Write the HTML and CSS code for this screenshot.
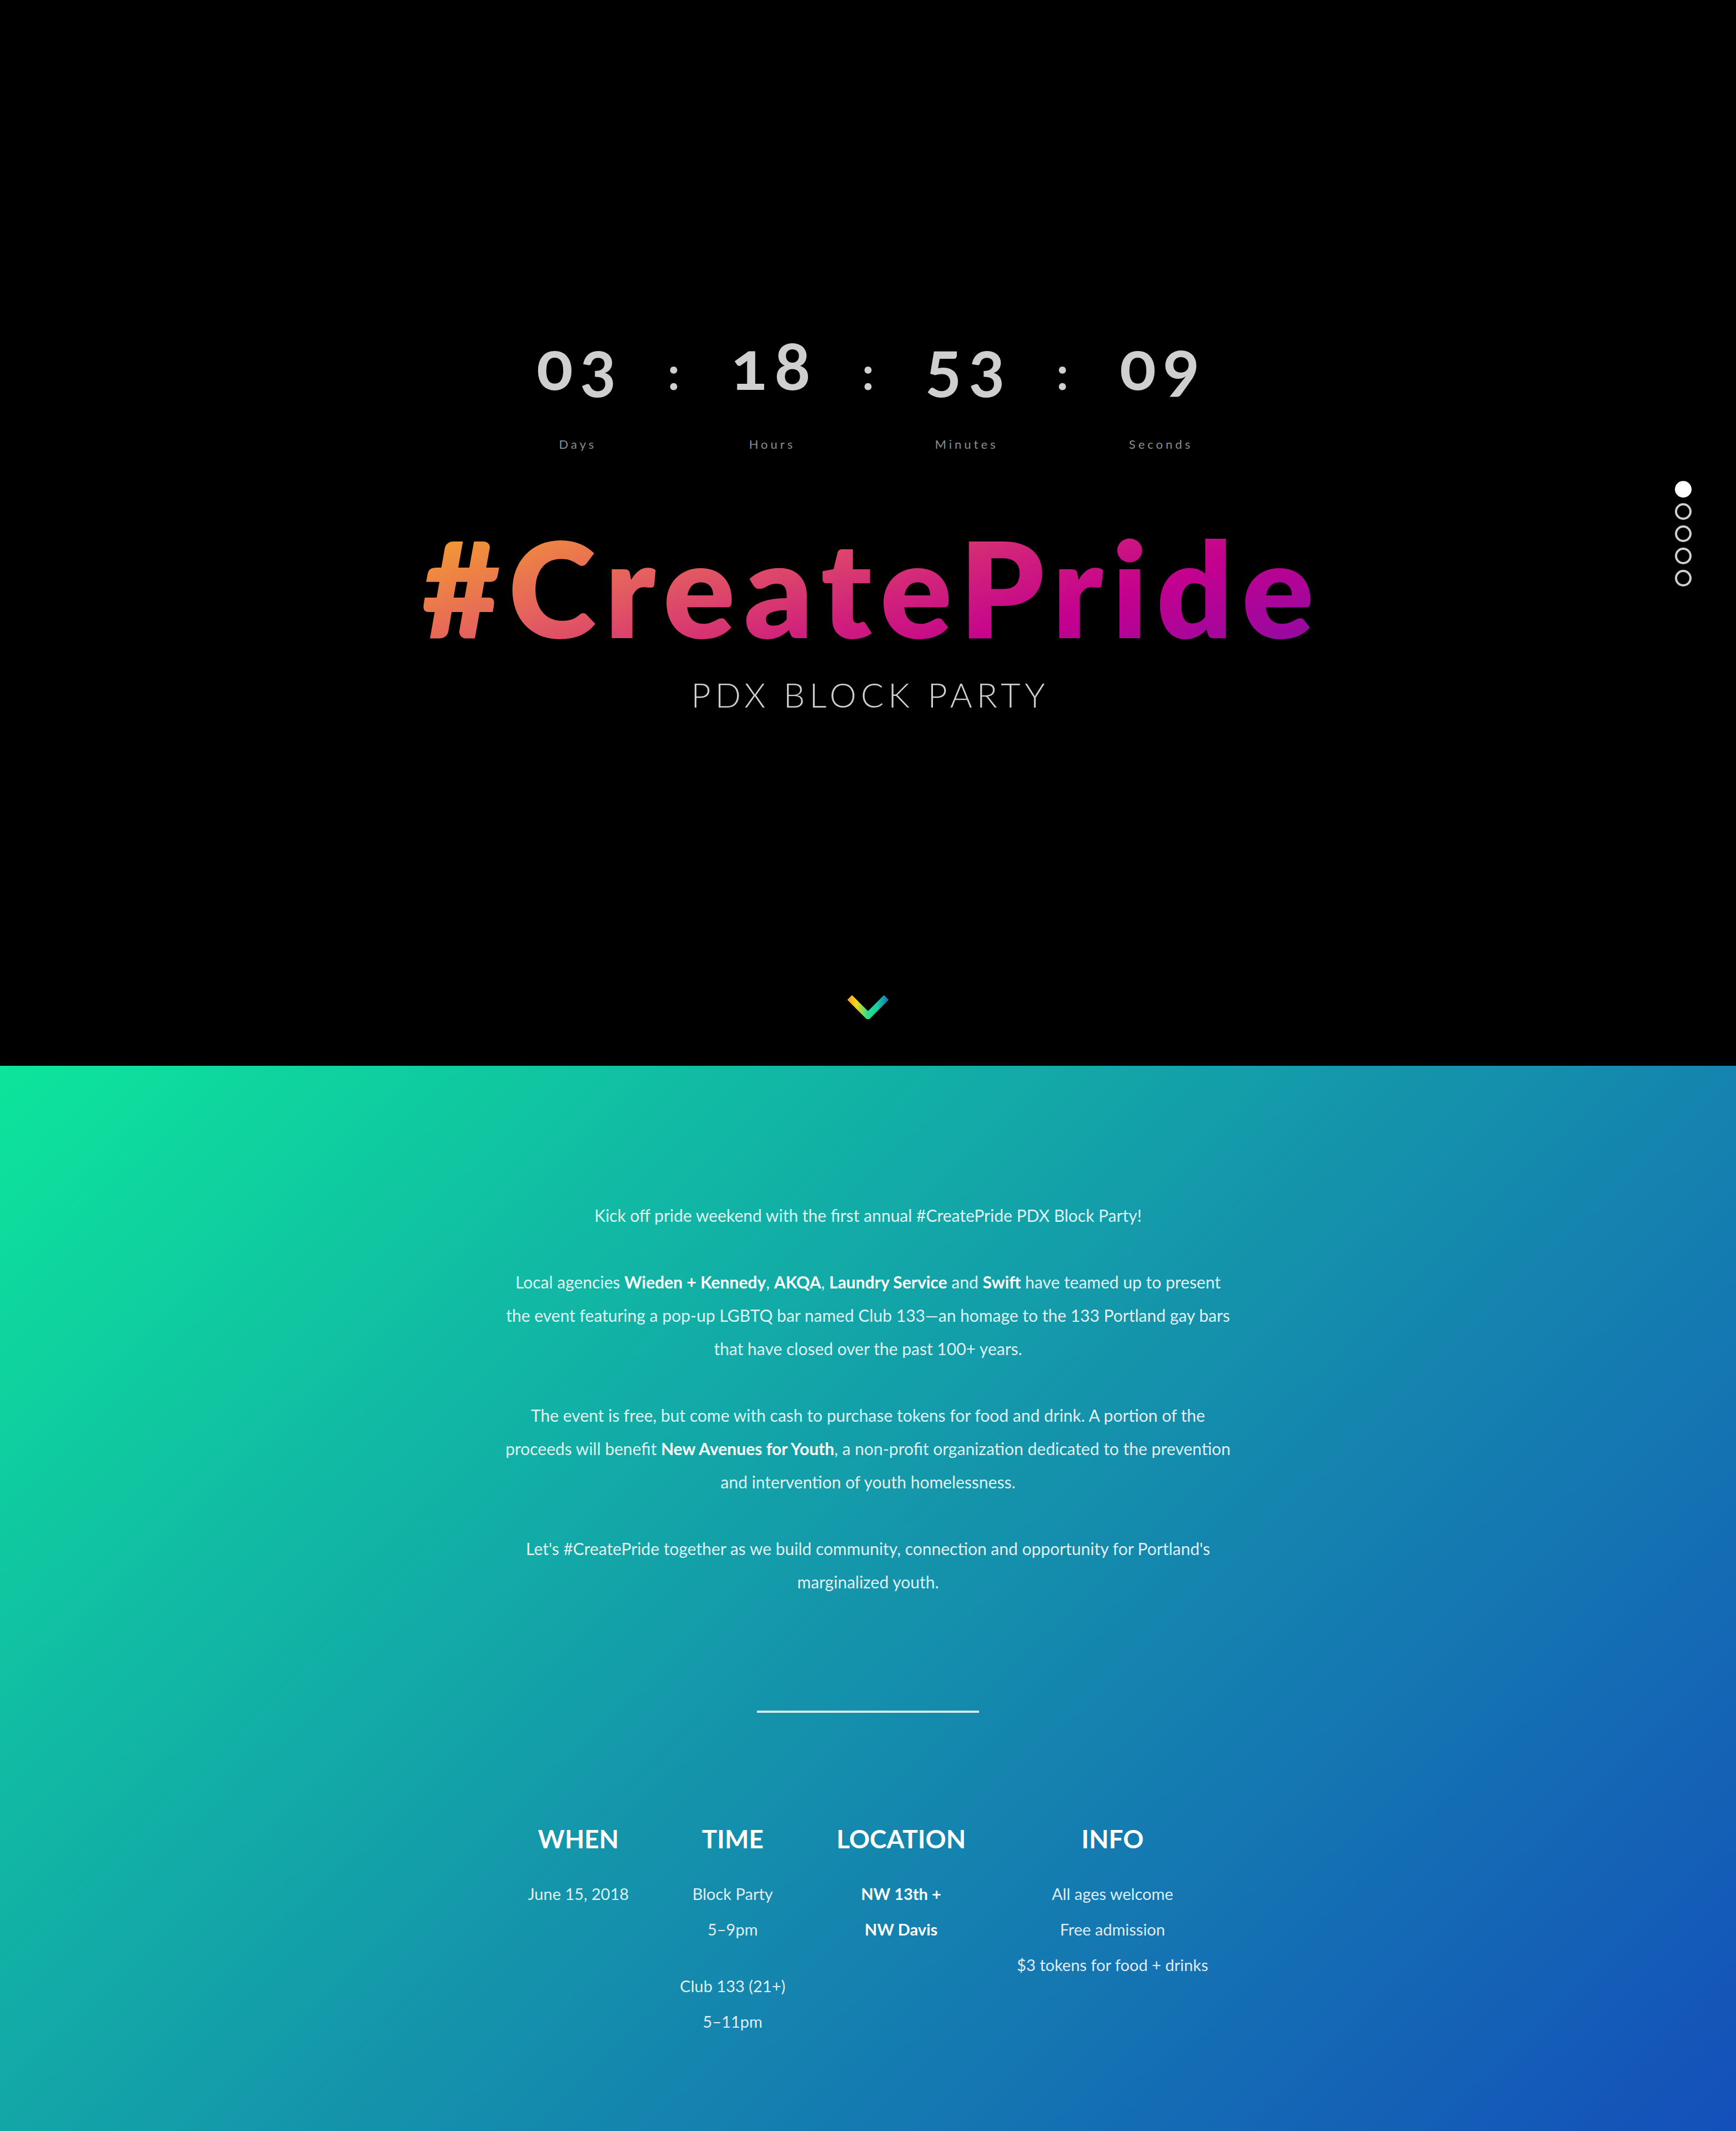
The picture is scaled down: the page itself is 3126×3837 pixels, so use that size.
FILE: index.html
```html
<!DOCTYPE html>
<html lang="en">
<head>
<meta charset="utf-8">
<title>#CreatePride — PDX Block Party</title>
<link rel="stylesheet" href="styles.css">
</head>
<body>
<section class="hero">
  <div class="countdown">
    <div class="unit"><span class="num">03</span><span class="label">Days</span></div>
    <span class="colon">:</span>
    <div class="unit"><span class="num">18</span><span class="label">Hours</span></div>
    <span class="colon">:</span>
    <div class="unit"><span class="num">53</span><span class="label">Minutes</span></div>
    <span class="colon">:</span>
    <div class="unit"><span class="num">09</span><span class="label">Seconds</span></div>
  </div>
  <h1 class="title">#CreatePride</h1>
  <p class="subtitle">PDX BLOCK PARTY</p>
  <a class="scroll" href="#about" aria-label="Scroll down">
    <svg width="74" height="44" viewBox="0 0 74 44">
      <defs>
        <linearGradient id="chev" x1="0" y1="0" x2="74" y2="0" gradientUnits="userSpaceOnUse">
          <stop offset="0" stop-color="#f6a126"/>
          <stop offset="0.22" stop-color="#f2d51f"/>
          <stop offset="0.5" stop-color="#22e08e"/>
          <stop offset="0.72" stop-color="#15d0a0"/>
          <stop offset="1" stop-color="#1672b4"/>
        </linearGradient>
      </defs>
      <polyline points="4,5 37,38 70,5" fill="none" stroke="url(#chev)" stroke-width="12" stroke-linecap="butt" stroke-linejoin="miter"/>
    </svg>
  </a>
  <nav class="dots">
    <span class="dot active"></span>
    <span class="dot"></span>
    <span class="dot"></span>
    <span class="dot"></span>
    <span class="dot"></span>
  </nav>
</section>

<section class="about" id="about">
  <div class="copy">
    <p>Kick off pride weekend with the first annual #CreatePride PDX Block Party!</p>
    <p>Local agencies <strong>Wieden + Kennedy</strong>, <strong>AKQA</strong>, <strong>Laundry Service</strong> and <strong>Swift</strong> have teamed up to present<br>the event featuring a pop-up LGBTQ bar named Club 133—an homage to the 133 Portland gay bars<br>that have closed over the past 100+ years.</p>
    <p>The event is free, but come with cash to purchase tokens for food and drink. A portion of the<br>proceeds will benefit <strong>New Avenues for Youth</strong>, a non-profit organization dedicated to the prevention<br>and intervention of youth homelessness.</p>
    <p>Let's #CreatePride together as we build community, connection and opportunity for Portland's<br>marginalized youth.</p>
  </div>
  <hr class="divider">
  <div class="details">
    <div class="col">
      <h2>WHEN</h2>
      <p>June 15, 2018</p>
    </div>
    <div class="col">
      <h2>TIME</h2>
      <p>Block Party<br>5–9pm</p>
      <p>Club 133 (21+)<br>5–11pm</p>
    </div>
    <div class="col">
      <h2>LOCATION</h2>
      <p class="strong">NW 13th +<br>NW Davis</p>
    </div>
    <div class="col">
      <h2>INFO</h2>
      <p>All ages welcome<br>Free admission<br>$3 tokens for food + drinks</p>
    </div>
  </div>
</section>
</body>
</html>
```
FILE: styles.css
```css
html, body {
  margin: 0;
  padding: 0;
}

body {
  font-family: "Lato", "Noto Sans", "Liberation Sans", sans-serif;
  background: #000;
  color: #fff;
}

/* ---------- Hero ---------- */
.hero {
  position: relative;
  height: 1919px;
  box-sizing: border-box;
  background: #000;
  display: flex;
  flex-direction: column;
  align-items: center;
  padding-top: 594px;
  padding-bottom: 84px;
}

.countdown {
  display: flex;
  align-items: baseline;
  justify-content: center;
}

.unit {
  width: 200px;
  display: flex;
  flex-direction: column;
  align-items: center;
}

.num {
  font-size: 122px;
  line-height: 1;
  font-weight: 700;
  letter-spacing: 12px;
  padding-left: 4px;
  margin-right: -8px;
  color: #cfcfcf;
  font-variant-numeric: oldstyle-nums;
}

.label {
  margin-top: 73px;
  font-size: 22px;
  line-height: 1;
  letter-spacing: 5px;
  padding-left: 5px;
  color: #8d8d8d;
}

.colon {
  width: 150px;
  text-align: center;
  font-size: 84px;
  line-height: 1;
  font-weight: 700;
  color: #cfcfcf;
}

.title {
  margin: 125px 0 0;
  padding-left: 16px;
  font-size: 240px;
  line-height: 1;
  font-weight: 800;
  letter-spacing: 16px;
  background: linear-gradient(160deg, #f7a928 0%, #e4605e 30%, #d0207c 55%, #c4008e 72%, #8c0ca6 100%);
  -webkit-background-clip: text;
  background-clip: text;
  color: transparent;
}

.subtitle {
  margin: 44px 0 0;
  padding-left: 8px;
  font-size: 61px;
  line-height: 1;
  font-weight: 300;
  letter-spacing: 8px;
  color: #cfcfcf;
}

.scroll {
  margin-top: auto;
  display: block;
  line-height: 0;
}

.dots {
  position: absolute;
  right: 80px;
  top: 866px;
  display: flex;
  flex-direction: column;
  gap: 10px;
}

.dot {
  width: 30px;
  height: 30px;
  box-sizing: border-box;
  border-radius: 50%;
  border: 4px solid #cfcfcf;
}

.dot.active {
  background: #fff;
  border-color: #fff;
}

/* ---------- About ---------- */
.about {
  height: 1918px;
  box-sizing: border-box;
  padding-top: 239px;
  background: linear-gradient(136deg, #0de59b 0%, #1494ab 50%, #144fba 100%);
  display: flex;
  flex-direction: column;
  align-items: center;
}

.copy {
  text-align: center;
  font-size: 30px;
  line-height: 60px;
  color: rgba(255, 255, 255, 0.88);
}

.copy p {
  margin: 0 0 60px;
}

.copy p:last-child {
  margin-bottom: 0;
}

.copy strong {
  font-weight: 700;
  color: #fff;
}

.divider {
  width: 400px;
  height: 4px;
  margin: 202px 0 0;
  border: 0;
  background: rgba(255, 255, 255, 0.82);
}

.details {
  margin-top: 204px;
  display: flex;
  justify-content: center;
  gap: 92px;
}

.col {
  text-align: center;
}

.col h2 {
  margin: 0 0 44px;
  font-size: 46px;
  line-height: 1;
  font-weight: 700;
  color: #fff;
}

.col p {
  margin: 0 0 38px;
  font-size: 29px;
  line-height: 64px;
  color: rgba(255, 255, 255, 0.88);
}

.col p.strong {
  font-weight: 700;
  color: #fff;
}
```
